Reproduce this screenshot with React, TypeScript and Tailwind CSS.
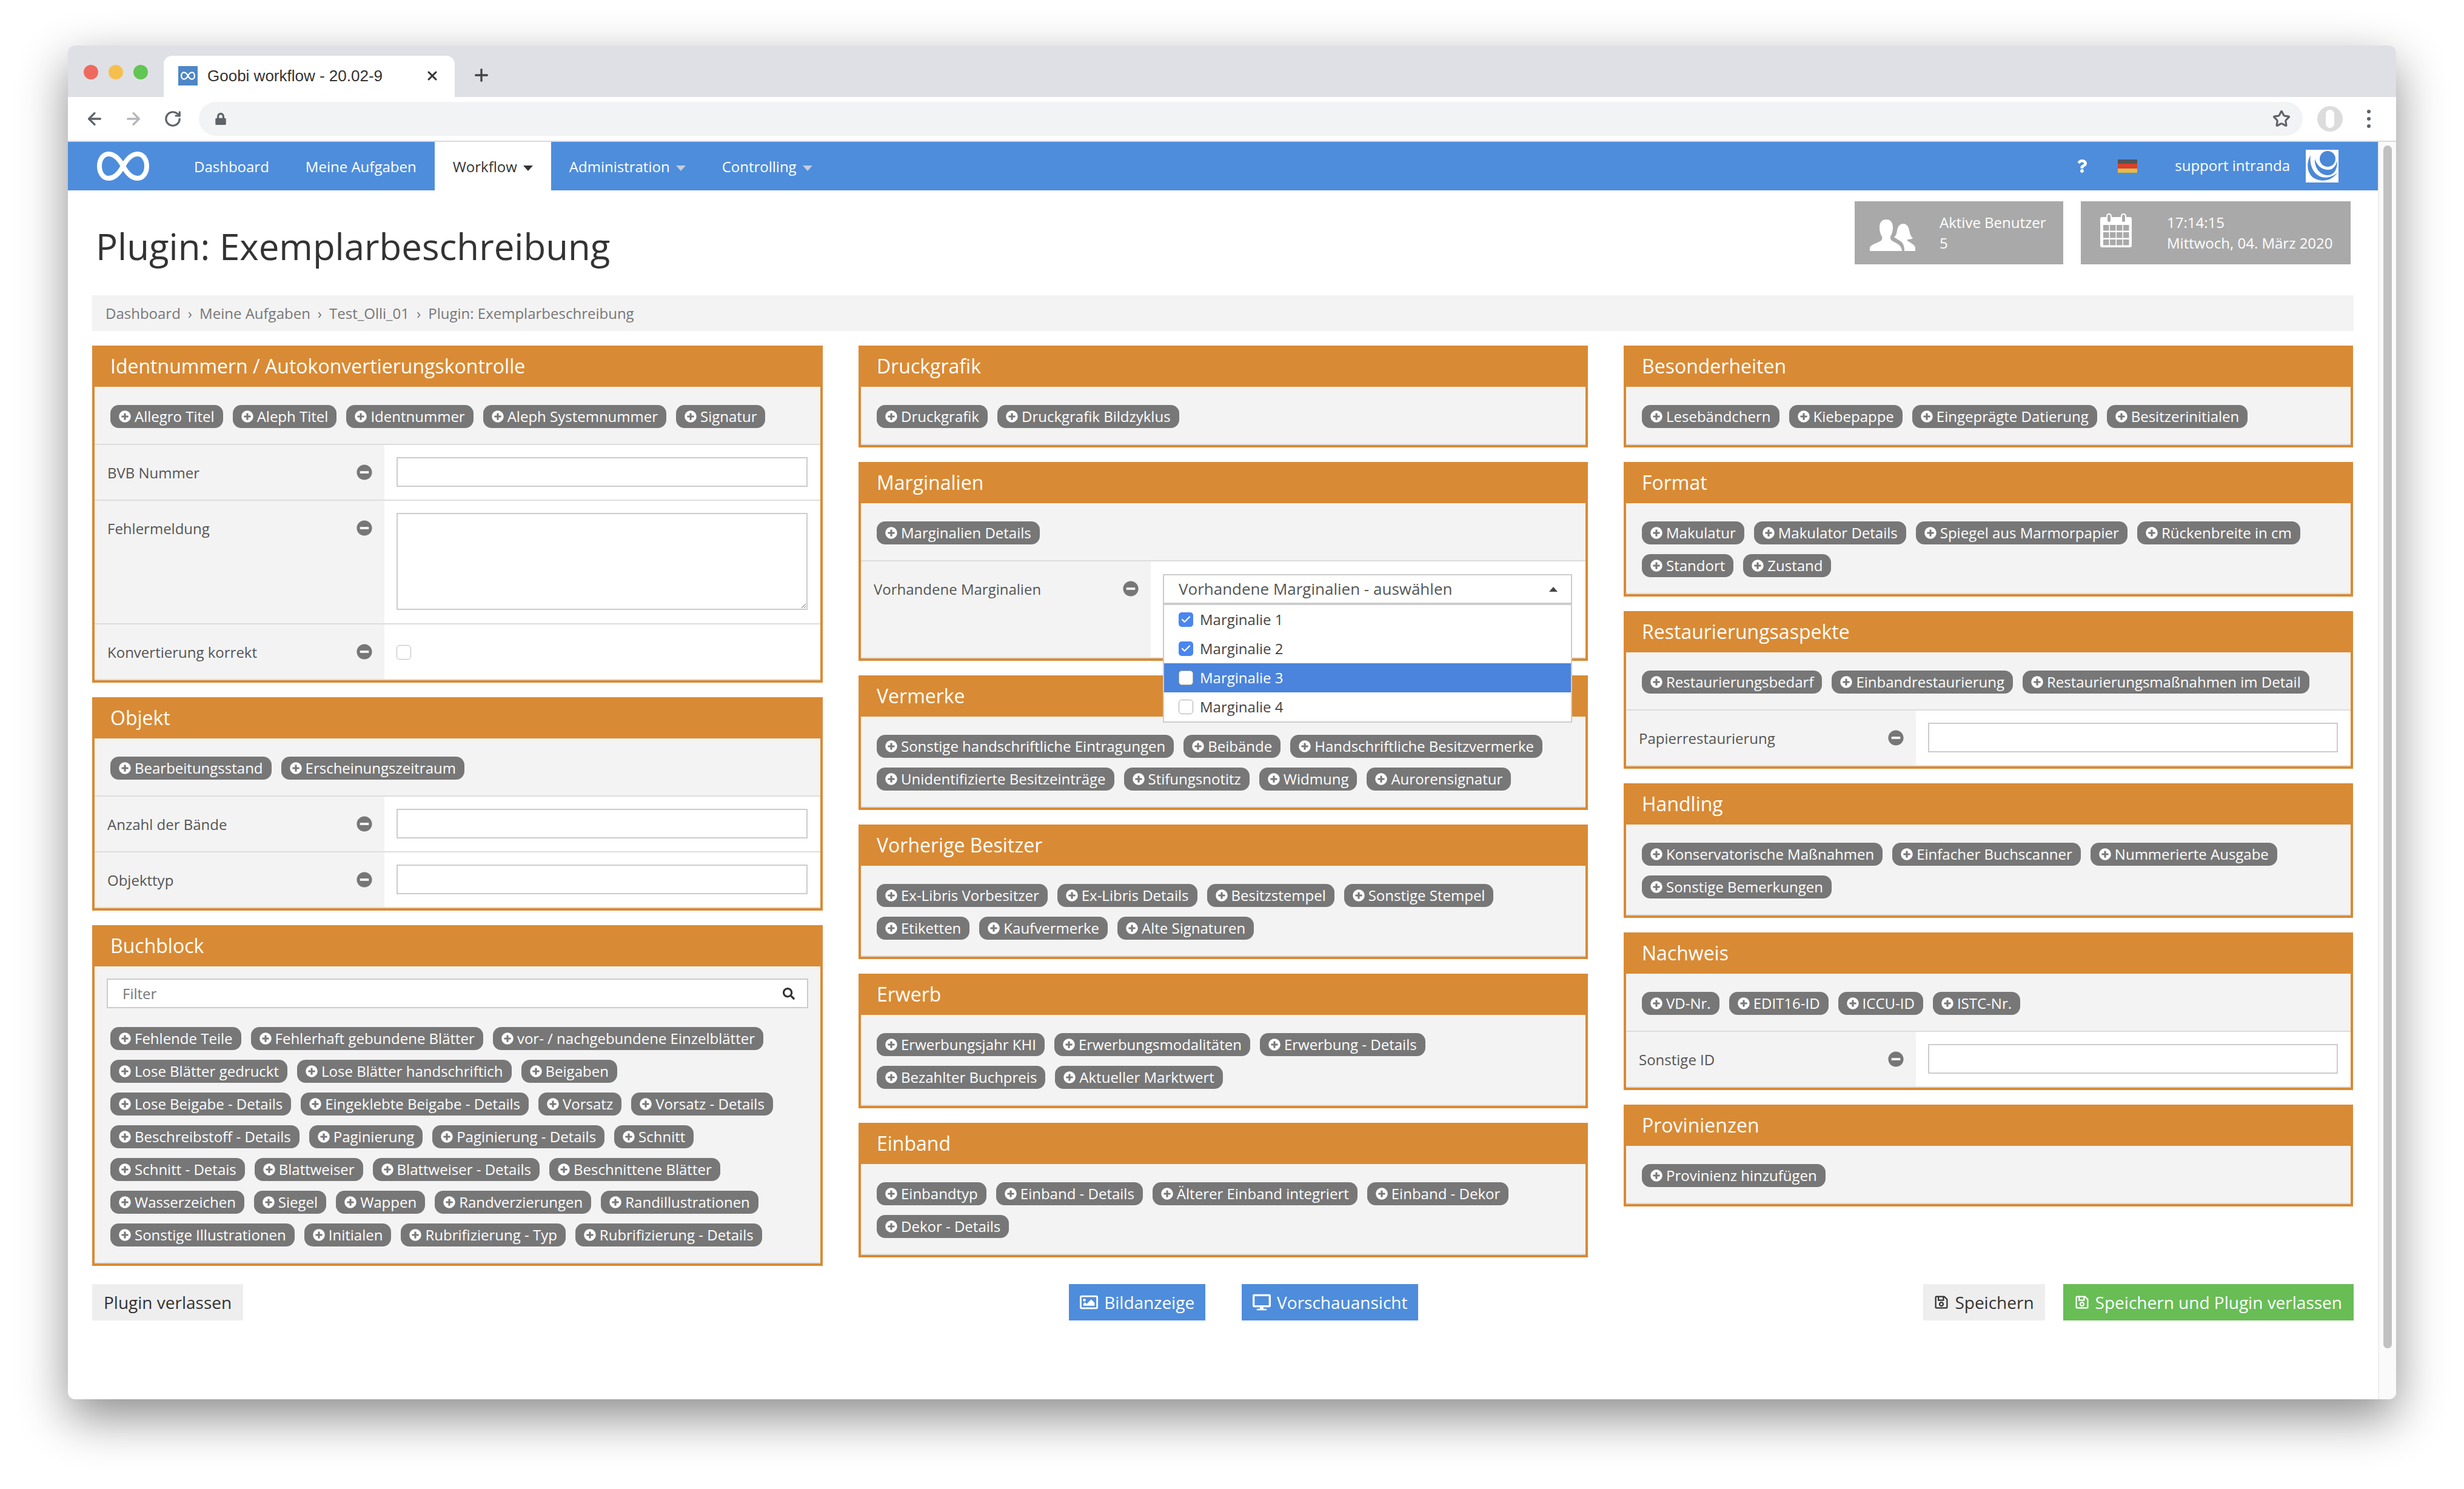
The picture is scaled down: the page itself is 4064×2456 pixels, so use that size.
import { ArrowLeft, ArrowRight, RotateCw, Star, X, Plus, Check } from "lucide-react";
import {
  FaPlusCircle,
  FaMinusCircle,
  FaLock,
  FaSearch,
  FaRegImage,
  FaDesktop,
  FaRegSave,
  FaQuestion,
} from "react-icons/fa";

type Panel = {
  title: string;
  chips: string[];
  filter?: boolean;
  fields?: { label: string; type: "input" | "textarea" | "checkbox" }[];
  select?: boolean;
};

const leftColumn: Panel[] = [
  {
    title: "Identnummern / Autokonvertierungskontrolle",
    chips: ["Allegro Titel", "Aleph Titel", "Identnummer", "Aleph Systemnummer", "Signatur"],
    fields: [
      { label: "BVB Nummer", type: "input" },
      { label: "Fehlermeldung", type: "textarea" },
      { label: "Konvertierung korrekt", type: "checkbox" },
    ],
  },
  {
    title: "Objekt",
    chips: ["Bearbeitungsstand", "Erscheinungszeitraum"],
    fields: [
      { label: "Anzahl der Bände", type: "input" },
      { label: "Objekttyp", type: "input" },
    ],
  },
  {
    title: "Buchblock",
    filter: true,
    chips: [
      "Fehlende Teile",
      "Fehlerhaft gebundene Blätter",
      "vor- / nachgebundene Einzelblätter",
      "Lose Blätter gedruckt",
      "Lose Blätter handschriftich",
      "Beigaben",
      "Lose Beigabe - Details",
      "Eingeklebte Beigabe - Details",
      "Vorsatz",
      "Vorsatz - Details",
      "Beschreibstoff - Details",
      "Paginierung",
      "Paginierung - Details",
      "Schnitt",
      "Schnitt - Detais",
      "Blattweiser",
      "Blattweiser - Details",
      "Beschnittene Blätter",
      "Wasserzeichen",
      "Siegel",
      "Wappen",
      "Randverzierungen",
      "Randillustrationen",
      "Sonstige Illustrationen",
      "Initialen",
      "Rubrifizierung - Typ",
      "Rubrifizierung - Details",
    ],
  },
];

const middleColumn: Panel[] = [
  { title: "Druckgrafik", chips: ["Druckgrafik", "Druckgrafik Bildzyklus"] },
  { title: "Marginalien", chips: ["Marginalien Details"], select: true },
  {
    title: "Vermerke",
    chips: [
      "Sonstige handschriftliche Eintragungen",
      "Beibände",
      "Handschriftliche Besitzvermerke",
      "Unidentifizierte Besitzeinträge",
      "Stifungsnotitz",
      "Widmung",
      "Aurorensignatur",
    ],
  },
  {
    title: "Vorherige Besitzer",
    chips: [
      "Ex-Libris Vorbesitzer",
      "Ex-Libris Details",
      "Besitzstempel",
      "Sonstige Stempel",
      "Etiketten",
      "Kaufvermerke",
      "Alte Signaturen",
    ],
  },
  {
    title: "Erwerb",
    chips: [
      "Erwerbungsjahr KHI",
      "Erwerbungsmodalitäten",
      "Erwerbung - Details",
      "Bezahlter Buchpreis",
      "Aktueller Marktwert",
    ],
  },
  {
    title: "Einband",
    chips: [
      "Einbandtyp",
      "Einband - Details",
      "Älterer Einband integriert",
      "Einband - Dekor",
      "Dekor - Details",
    ],
  },
];

const rightColumn: Panel[] = [
  {
    title: "Besonderheiten",
    chips: ["Lesebändchern", "Kiebepappe", "Eingeprägte Datierung", "Besitzerinitialen"],
  },
  {
    title: "Format",
    chips: [
      "Makulatur",
      "Makulator Details",
      "Spiegel aus Marmorpapier",
      "Rückenbreite in cm",
      "Standort",
      "Zustand",
    ],
  },
  {
    title: "Restaurierungsaspekte",
    chips: ["Restaurierungsbedarf", "Einbandrestaurierung", "Restaurierungsmaßnahmen im Detail"],
    fields: [{ label: "Papierrestaurierung", type: "input" }],
  },
  {
    title: "Handling",
    chips: [
      "Konservatorische Maßnahmen",
      "Einfacher Buchscanner",
      "Nummerierte Ausgabe",
      "Sonstige Bemerkungen",
    ],
  },
  {
    title: "Nachweis",
    chips: ["VD-Nr.", "EDIT16-ID", "ICCU-ID", "ISTC-Nr."],
    fields: [{ label: "Sonstige ID", type: "input" }],
  },
  { title: "Provinienzen", chips: ["Provinienz hinzufügen"] },
];

const options = [
  { label: "Marginalie 1", checked: true },
  { label: "Marginalie 2", checked: true },
  { label: "Marginalie 3", active: true },
  { label: "Marginalie 4" },
];

function Infinity({ className }: { className: string }) {
  return (
    <svg viewBox="0 0 86 50" className={className} fill="none" stroke="currentColor" strokeWidth="8">
      <path d="M43 25C36 12 29 5 19 5 10 5 4 14 4 25s6 20 15 20c10 0 17-7 24-20 7-13 14-20 24-20 9 0 15 9 15 20s-6 20-15 20c-10 0-17-7-24-20Z" />
    </svg>
  );
}

function Chip({ label }: { label: string }) {
  return (
    <span className="flex h-[38px] items-center gap-[6px] rounded-[14px] bg-[#777777] px-[14px] text-[24px] leading-none text-white">
      <FaPlusCircle className="h-[20px] w-[20px] shrink-0" />
      {label}
    </span>
  );
}

function FieldRow({ label, children, tall }: { label: string; children: React.ReactNode; tall?: string }) {
  return (
    <div className={`flex border-b-2 border-[#dddddd] ${tall ?? "h-[92px]"}`}>
      <div className="flex w-[478px] shrink-0 items-start justify-between bg-[#f3f3f3] pl-[21px] pr-[20px] pt-[30px] text-[24px] leading-[32px] text-[#555555]">
        <span>{label}</span>
        <FaMinusCircle className="mt-[2px] h-[26px] w-[26px] text-[#777777]" />
      </div>
      <div className="relative flex-1 bg-white pl-[20px] pr-[21px] pt-[20px]">{children}</div>
    </div>
  );
}

function MarginalienSelect() {
  return (
    <div className="relative mt-[1px] w-[675px]">
      <div className="flex h-[49px] items-center justify-between border-2 border-[#cccccc] bg-white pl-[24px] pr-[22px] text-[26px] text-[#555555]">
        <span>Vorhandene Marginalien - auswählen</span>
        <span className="h-0 w-0 border-x-[7px] border-b-[8px] border-x-transparent border-b-[#444444]" />
      </div>
      <div className="absolute left-0 right-0 top-[47px] z-10 border-2 border-t-4 border-[#cccccc] bg-white text-[24px]">
        {options.map((o) => (
          <div
            key={o.label}
            className={`flex h-[48px] items-center gap-[11px] pl-[24px] ${o.active ? "bg-[#4a84dc] text-white" : "text-[#444444]"}`}
          >
            <span
              className={`flex h-[24px] w-[24px] items-center justify-center rounded-[5px] ${o.checked ? "bg-[#4a86f0]" : "border border-[#aaaaaa] bg-white"}`}
            >
              {o.checked && <Check className="h-[18px] w-[18px] text-white" strokeWidth={3} />}
            </span>
            {o.label}
          </div>
        ))}
      </div>
    </div>
  );
}

function PanelBox({ panel }: { panel: Panel }) {
  return (
    <section className="border-x-4 border-b-4 border-[#d98a34] bg-[#f3f3f3]">
      <h3 className="-mx-1 flex h-[68px] items-center bg-[#d98a34] pl-[30px] text-[32px] font-normal text-white">
        {panel.title}
      </h3>
      {panel.filter && (
        <div className="mx-[20px] mt-[20px] flex h-[49px] items-center justify-between border-2 border-[#cccccc] bg-white pl-[24px] pr-[20px] text-[24px] text-[#777777]">
          <span>Filter</span>
          <FaSearch className="h-[20px] w-[20px] text-[#333333]" />
        </div>
      )}
      <div
        className={`flex flex-wrap gap-4 border-b-2 border-[#dddddd] pb-[26px] pl-[26px] pr-[50px] ${panel.filter ? "pt-[31px]" : "pt-[30px]"}`}
      >
        {panel.chips.map((c) => (
          <Chip key={c} label={c} />
        ))}
      </div>
      {panel.fields?.map((f) =>
        f.type === "textarea" ? (
          <FieldRow key={f.label} label={f.label} tall="h-[204px]">
            <textarea className="block h-[160px] w-full border-2 border-[#cccccc] bg-white" />
          </FieldRow>
        ) : f.type === "checkbox" ? (
          <FieldRow key={f.label} label={f.label}>
            <span className="mt-[14px] block h-[24px] w-[24px] rounded-[5px] border border-[#bbbbbb] bg-white" />
          </FieldRow>
        ) : (
          <FieldRow key={f.label} label={f.label}>
            <input className="block h-[49px] w-full border-2 border-[#cccccc] bg-white" />
          </FieldRow>
        ),
      )}
      {panel.select && (
        <FieldRow label="Vorhandene Marginalien" tall="h-[160px]">
          <MarginalienSelect />
        </FieldRow>
      )}
    </section>
  );
}

function Column({ panels }: { panels: Panel[] }) {
  return (
    <div className="flex flex-col gap-[24px]">
      {panels.map((p) => (
        <PanelBox key={p.title} panel={p} />
      ))}
    </div>
  );
}

function NavItem({ label, caret, active }: { label: string; caret?: boolean; active?: boolean }) {
  return (
    <div
      className={`flex h-full items-center gap-[10px] px-[30px] pt-[2px] ${active ? "bg-white text-[#333333]" : "text-white"}`}
    >
      {label}
      {caret && (
        <span
          className={`mt-[4px] h-0 w-0 border-x-[8px] border-t-[9px] border-x-transparent ${active ? "border-t-[#333333]" : "border-t-[#c5cdd8]"}`}
        />
      )}
    </div>
  );
}

function UsersIcon() {
  return (
    <svg viewBox="0 0 75 52" className="mt-[8px] h-[52px] w-[75px] fill-white">
      <path d="M27 0C19 0 16 6 16 13c0 7 2 12 4 15 1 4 0 6-3 8-6 3-14 5-17 10v6h53c0-7-6-12-13-15-4-2-7-4-6-9 2-3 4-8 4-15C38 6 35 0 27 0Z" />
      <path d="M55 7c-6 0-9 5-10 11-1 6-2 9-5 11 4 3 8 5 11 7 4 3 6 8 6 16h18v-6c-2-5-9-8-13-11v-2c4 0 7-1 9-2-4-4-5-8-6-13-1-6-4-11-10-11Z" />
    </svg>
  );
}

function CalendarIcon() {
  const cols = [
    [5, 9.5],
    [16, 9.5],
    [27, 9.5],
    [38, 9.5],
  ];
  const rows = [19, 31, 43];
  return (
    <svg viewBox="0 0 52 56" className="mb-[8px] h-[56px] w-[52px]">
      <rect y="6" width="52" height="50" rx="3" fill="white" />
      <rect x="11" y="1" width="7" height="14" rx="3.5" fill="#a9a9a9" stroke="white" strokeWidth="2" />
      <rect x="35" y="1" width="7" height="14" rx="3.5" fill="#a9a9a9" stroke="white" strokeWidth="2" />
      {rows.map((y) =>
        cols.map(([x, w]) => <rect key={`${x}-${y}`} x={x} y={y} width={w} height="9.5" fill="#a9a9a9" />),
      )}
    </svg>
  );
}

function IntrandaLogo() {
  return (
    <svg viewBox="0 0 54 54" className="h-[54px] w-[54px] bg-white" fill="#4a88d8">
      <circle cx="36" cy="15" r="13" />
      <path d="M15 15c-1 15 9 27 21 27 10 0 16-8 16-24-2 9-8 16-17 15-10-1-17-8-20-18Z" />
      <path d="M8 9C0 22 2 40 14 47c10 6 28 6 38-9-10 9-24 10-32 4C10 35 6 22 8 9Z" />
    </svg>
  );
}

export default function App() {
  return (
    <div className="h-[2456px] w-[4064px] overflow-hidden bg-white pl-[112px] pt-[75px] font-['Open_Sans',sans-serif]">
      <div className="flex h-[2233px] w-[3840px] flex-col overflow-hidden rounded-[12px] bg-white shadow-[0_30px_80px_rgba(0,0,0,0.45)]">
        {/* Browser tab strip */}
        <div className="flex h-[85px] shrink-0 items-end bg-[#dfe0e5] pl-[26px]">
          <div className="mb-[29px] flex gap-[17px] self-end">
            <span className="h-[24px] w-[24px] rounded-full bg-[#ee6a5f]" />
            <span className="h-[24px] w-[24px] rounded-full bg-[#f5bf4f]" />
            <span className="h-[24px] w-[24px] rounded-full bg-[#62c554]" />
          </div>
          <div className="ml-[26px] flex h-[68px] w-[480px] items-center rounded-t-[14px] bg-white pb-[2px] pl-[24px]">
            <span className="flex h-[32px] w-[32px] items-center justify-center bg-[#4f86c6]">
              <Infinity className="w-[24px] text-white" />
            </span>
            <span className="ml-[16px] font-['Liberation_Sans',sans-serif] text-[26px] text-[#333333]">
              Goobi workflow - 20.02-9
            </span>
            <X className="ml-[70px] h-[24px] w-[24px] text-[#333333]" strokeWidth={3} />
          </div>
          <Plus className="mb-[20px] ml-[28px] h-[32px] w-[32px] text-[#444444]" strokeWidth={2.5} />
        </div>

        {/* Browser toolbar */}
        <div className="flex h-[74px] shrink-0 items-center border-b-2 border-[#d9dade] bg-white pl-[28px] pr-[38px]">
          <ArrowLeft className="h-[32px] w-[32px] text-[#5f6368]" strokeWidth={2.5} />
          <ArrowRight className="ml-[32px] h-[32px] w-[32px] text-[#b4b6b9]" strokeWidth={2.5} />
          <RotateCw className="ml-[34px] h-[30px] w-[30px] text-[#5f6368]" strokeWidth={2.5} />
          <div className="ml-[28px] flex h-[56px] w-[3470px] items-center justify-between rounded-full bg-[#f1f3f4] pl-[27px] pr-[20px]">
            <FaLock className="h-[20px] w-[18px] text-[#5f6368]" />
            <Star className="h-[30px] w-[30px] text-[#5f6368]" strokeWidth={2.5} />
          </div>
          <span className="ml-[24px] flex h-[42px] w-[42px] items-center justify-center rounded-full bg-[#dcdcdc]">
            <span className="h-[30px] w-[14px] rounded-full bg-white" />
          </span>
          <div className="ml-[40px] flex flex-col gap-[6px]">
            <span className="h-[6px] w-[6px] rounded-full bg-[#5f6368]" />
            <span className="h-[6px] w-[6px] rounded-full bg-[#5f6368]" />
            <span className="h-[6px] w-[6px] rounded-full bg-[#5f6368]" />
          </div>
        </div>

        <div className="flex min-h-0 flex-1">
          <div className="w-[3810px] shrink-0">
            {/* Goobi navbar */}
            <nav className="flex h-[80px] items-center bg-[#4e8ddc] text-[24px]">
              <Infinity className="ml-[48px] w-[86px] text-white" />
              <div className="ml-[44px] flex h-full items-center">
                <NavItem label="Dashboard" />
                <NavItem label="Meine Aufgaben" />
                <NavItem label="Workflow" caret active />
                <NavItem label="Administration" caret />
                <NavItem label="Controlling" caret />
              </div>
              <div className="ml-auto flex items-center pr-[65px] text-white">
                <FaQuestion className="h-[22px] w-[18px]" />
                <span className="ml-[50px] h-[22px] w-[32px] bg-[linear-gradient(#555_0%,#555_33%,#d8402e_33%,#d8402e_66%,#e2bd4c_66%)]" />
                <span className="mb-[2px] ml-[62px]">support intranda</span>
                <span className="ml-[26px]">
                  <IntrandaLogo />
                </span>
              </div>
            </nav>

            <main className="px-[40px]">
              {/* Page heading and info boxes */}
              <div className="flex h-[173px] items-start justify-between">
                <h1 className="mt-[52px] pl-[6px] text-[60px] font-normal leading-[80px] text-[#333333]">
                  Plugin: Exemplarbeschreibung
                </h1>
                <div className="mr-[5px] mt-[18px] flex gap-[29px] text-[24px] leading-[34px] text-white">
                  <div className="flex h-[104px] w-[344px] items-center bg-[#a9a9a9] pl-[25px]">
                    <UsersIcon />
                    <div className="ml-[40px]">
                      <div>Aktive Benutzer</div>
                      <div>5</div>
                    </div>
                  </div>
                  <div className="flex h-[104px] w-[445px] items-center bg-[#a9a9a9] pl-[32px]">
                    <CalendarIcon />
                    <div className="ml-[58px]">
                      <div>17:14:15</div>
                      <div>Mittwoch, 04. März 2020</div>
                    </div>
                  </div>
                </div>
              </div>

              {/* Breadcrumb */}
              <div className="flex h-[59px] items-center gap-[12px] bg-[#f3f3f3] pl-[22px] text-[24px] text-[#777777]">
                <span>Dashboard</span>
                <span>›</span>
                <span>Meine Aufgaben</span>
                <span>›</span>
                <span>Test_Olli_01</span>
                <span>›</span>
                <span>Plugin: Exemplarbeschreibung</span>
              </div>

              <div className="mt-[24px] grid grid-cols-[1205px_1203px_1203px] gap-x-[59px]">
                <Column panels={leftColumn} />
                <Column panels={middleColumn} />
                <Column panels={rightColumn} />
              </div>

              {/* Footer buttons */}
              <div className="mt-[30px] flex h-[60px] text-[28px]">
                <button className="h-full bg-[#eeeeee] px-[19px] text-[#333333]">Plugin verlassen</button>
                <div className="ml-[1362px] flex gap-[60px] text-white">
                  <button className="flex h-full items-center gap-[10px] bg-[#4e8ddc] px-[18px]">
                    <FaRegImage className="h-[30px] w-[30px]" />
                    Bildanzeige
                  </button>
                  <button className="flex h-full items-center gap-[10px] bg-[#4e8ddc] px-[18px]">
                    <FaDesktop className="h-[30px] w-[30px]" />
                    Vorschauansicht
                  </button>
                </div>
                <div className="ml-auto flex gap-[30px]">
                  <button className="flex h-full items-center gap-[10px] bg-[#eeeeee] px-[18px] text-[#333333]">
                    <FaRegSave className="h-[24px] w-[24px]" />
                    Speichern
                  </button>
                  <button className="flex h-full items-center gap-[10px] bg-[#68bd55] px-[19px] text-white">
                    <FaRegSave className="h-[24px] w-[24px]" />
                    Speichern und Plugin verlassen
                  </button>
                </div>
              </div>
            </main>
          </div>

          {/* Scrollbar */}
          <div className="flex-1 border-l-2 border-[#eeeeee] bg-[#fafafa] px-[7px] pt-[6px]">
            <div className="h-[1984px] rounded-full bg-[#c1c1c1]" />
          </div>
        </div>
      </div>
    </div>
  );
}
